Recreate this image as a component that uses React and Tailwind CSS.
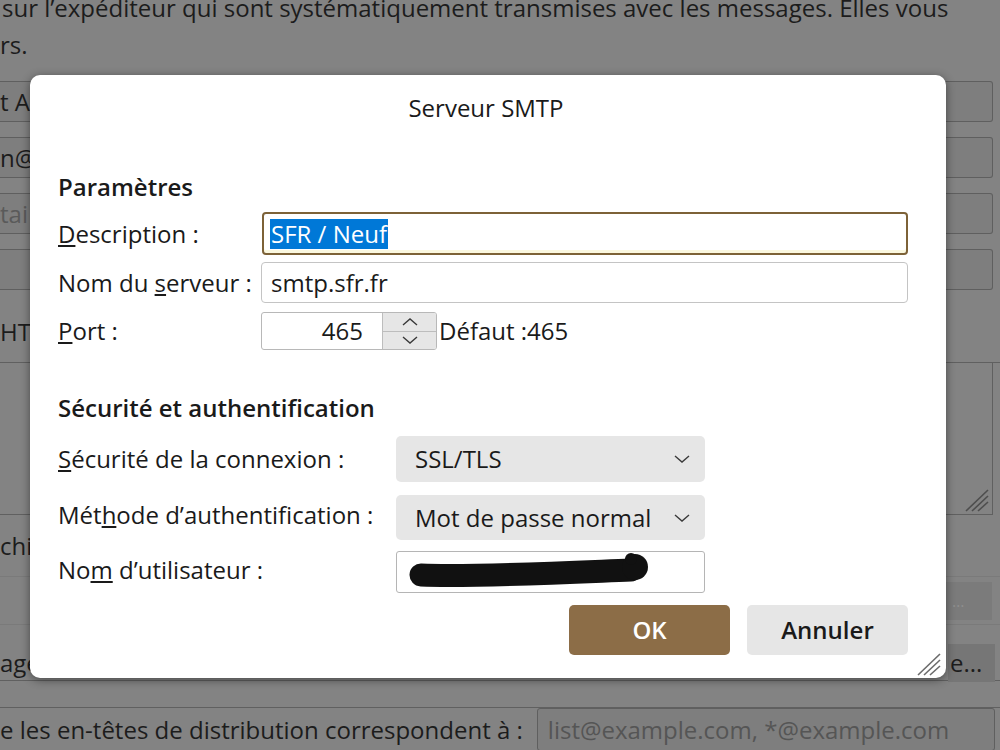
import React from "react";

const Chevron = ({ up = false, className = "" }) => (
  <svg width="18" height="10" viewBox="0 0 18 10" className={className}>
    <polyline
      points={up ? "2,8 9,2 16,8" : "2,2 9,8 16,2"}
      fill="none"
      stroke="#3a3a3a"
      strokeWidth="1.4"
    />
  </svg>
);

const Grip = ({ color = "#6b6b6b" }) => (
  <svg width="28" height="26" viewBox="0 0 28 26">
    <line x1="26" y1="4" x2="4" y2="25" stroke={color} strokeWidth="1.6" />
    <line x1="26" y1="10" x2="10" y2="25" stroke={color} strokeWidth="1.6" />
    <line x1="26" y1="16" x2="16" y2="25" stroke={color} strokeWidth="1.6" />
  </svg>
);

const BgInput = ({ children, muted }) => (
  <div
    className={`flex h-[41px] w-[993px] items-center rounded-r-[3px] border-y border-r border-[#5f5f5f] bg-[#7e7e7e] text-[24px] ${
      muted ? "text-[#5a5a5a]" : "text-[#1c1c1c]"
    }`}
  >
    {children}
  </div>
);

const Select = ({ value }) => (
  <div className="flex h-full w-[309px] items-center justify-between rounded-[5px] bg-[#e6e6e6] pl-[19px] pr-[14px]">
    <span>{value}</span>
    <Chevron />
  </div>
);

export default function App() {
  return (
    <div className="relative h-[750px] w-[1000px] overflow-hidden bg-[#838383] font-['Open_Sans',sans-serif] text-[#1c1c1c]">
      {/* page behind the dialog */}
      <div className="text-[24px]">
        <p className="h-[16px] pl-[2px] leading-[16px]">
          sur l’expéditeur qui sont systématiquement transmises avec les messages. Elles vous
        </p>
        <p className="mt-[17px] leading-[24px]">rs.</p>
      </div>

      <div className="mt-[24px] flex flex-col gap-[15px]">
        <BgInput>t A</BgInput>
        <BgInput>n@</BgInput>
        <BgInput muted>tai</BgInput>
        <BgInput />
      </div>

      <div className="flex h-[73px] items-center border-b border-[#606060] text-[24px]">
        <span className="pt-[12px]">HTM</span>
      </div>
      <div className="relative h-[152px] w-[993px] border-b border-r border-[#606060]">
        <div className="absolute bottom-[2px] right-[2px]">
          <Grip color="#4e4e4e" />
        </div>
      </div>
      <div className="flex h-[62px] items-center border-b border-[#7a7a7a] text-[24px]">
        <span>chi</span>
      </div>
      <div className="flex h-[48px] items-center justify-end border-b border-[#7a7a7a] pr-[8px]">
        <div className="flex h-[38px] w-[46px] items-center bg-[#7b7b7b] pl-[6px] text-[16px] text-[#8e8e8e]">
          …
        </div>
      </div>
      <div className="flex h-[56px] items-center justify-between border-b border-[#606060] text-[24px]">
        <span className="pt-[20px]">age</span>
        <div className="mr-[5px] mt-[20px] flex h-[38px] w-[47px] items-center bg-[#767676] pl-[2px]">
          e...
        </div>
      </div>
      <div className="mt-[26px] flex items-center gap-[14px] border-t border-[#606060] text-[24px]">
        <span>e les en-têtes de distribution correspondent à :</span>
        <div className="flex h-[43px] w-[458px] items-center rounded-[3px] border border-[#5f5f5f] bg-[#7e7e7e] pl-[10px] text-[#555555]">
          list@example.com, *@example.com
        </div>
      </div>

      {/* dialog */}
      <div className="absolute left-[30px] top-[75px] flex h-[603px] w-[916px] flex-col rounded-[10px] bg-white pl-[28px] pr-[38px] text-[24px] text-[#1a1a1a] shadow-[0_2px_10px_rgba(0,0,0,0.45)]">
        <div className="flex h-[66px] items-center justify-center pl-[6px]">Serveur SMTP</div>

        <h2 className="mt-[32px] h-[28px] font-semibold leading-[28px]">Paramètres</h2>

        <div className="mt-[11px] flex h-[43px] items-center">
          <label className="w-[204px]">
            <span className="underline">D</span>escription :
          </label>
          <div className="flex h-full flex-1 items-center rounded-[4px] border-2 border-[#7d6238] bg-white pl-[6px] shadow-[inset_0_-3px_0_#fbf8df]">
            <span className="bg-[#0078d7] px-[1px] leading-[30px] text-white">SFR / Neuf</span>
          </div>
        </div>

        <div className="mt-[7px] flex h-[41px] items-center">
          <label className="w-[203px]">
            Nom du <span className="underline">s</span>erveur :
          </label>
          <div className="flex h-full flex-1 items-center rounded-[4px] border border-[#c4c4c4] pl-[9px]">
            smtp.sfr.fr
          </div>
        </div>

        <div className="mt-[9px] flex h-[38px] items-center">
          <label className="w-[203px]">
            <span className="underline">P</span>ort :
          </label>
          <div className="flex h-full w-[176px] overflow-hidden rounded-[3px] border border-[#b8b8b8]">
            <div className="flex flex-1 items-center justify-end pr-[19px]">465</div>
            <div className="flex w-[54px] flex-col border-l border-[#bdbdbd] bg-[#e6e6e6]">
              <div className="flex flex-1 items-center justify-center border-b border-[#bdbdbd]">
                <Chevron up />
              </div>
              <div className="flex flex-1 items-center justify-center">
                <Chevron />
              </div>
            </div>
          </div>
          <span className="ml-[2px]">Défaut :465</span>
        </div>

        <h2 className="mt-[44px] h-[28px] font-semibold leading-[28px]">Sécurité et authentification</h2>

        <div className="mt-[14px] flex h-[46px] items-center">
          <label className="w-[338px]">
            <span className="underline">S</span>écurité de la connexion :
          </label>
          <Select value="SSL/TLS" />
        </div>

        <div className="mt-[13px] flex h-[45px] items-center">
          <label className="w-[338px] -translate-y-[3px]">
            Mét<span className="underline">h</span>ode d’authentification :
          </label>
          <Select value="Mot de passe normal" />
        </div>

        <div className="mt-[11px] flex h-[42px] items-center">
          <label className="w-[338px] -translate-y-[2px]">
            No<span className="underline">m</span> d’utilisateur :
          </label>
          <div className="h-full w-[309px] rounded-[3px] border border-[#b5b5b5] bg-white">
            <svg width="260" height="40" viewBox="0 0 260 40">
              <path
                d="M24 23 C 80 25, 160 21, 234 18"
                fill="none"
                stroke="#111"
                strokeWidth="23"
                strokeLinecap="round"
              />
              <circle cx="238" cy="15" r="13" fill="#111" />
              <circle cx="234" cy="7" r="6" fill="#111" />
            </svg>
          </div>
        </div>

        <div className="mt-[12px] flex h-[50px] justify-end gap-[17px]">
          <button className="w-[161px] rounded-[5px] bg-[#8c6d47] font-semibold text-white">OK</button>
          <button className="w-[161px] rounded-[5px] bg-[#e6e6e6] font-semibold text-[#1a1a1a]">Annuler</button>
        </div>

        <div className="absolute bottom-[2px] right-[4px]">
          <Grip />
        </div>
      </div>
    </div>
  );
}
